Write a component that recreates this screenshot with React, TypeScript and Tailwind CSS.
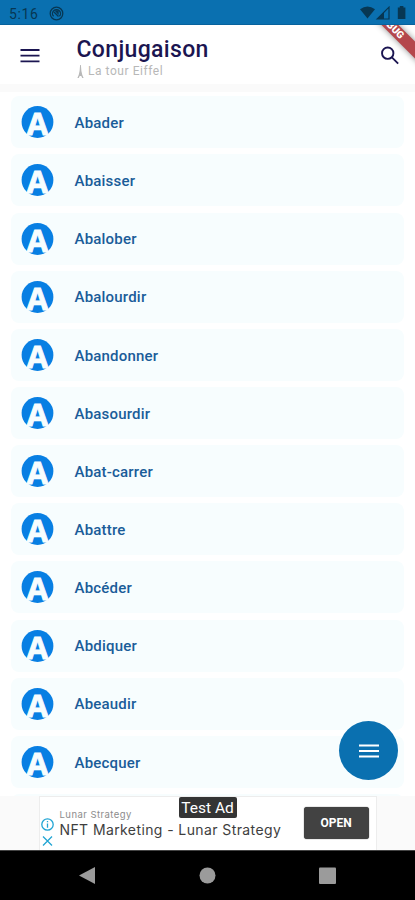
const verbs = [
  "Abader",
  "Abaisser",
  "Abalober",
  "Abalourdir",
  "Abandonner",
  "Abasourdir",
  "Abat-carrer",
  "Abattre",
  "Abcéder",
  "Abdiquer",
  "Abeaudir",
  "Abecquer",
];

const StatusBar = () => (
  <div className="flex h-[25px] shrink-0 items-center border-b border-[#07629d] bg-[#0a70b0] pl-[9px] pr-[8px] text-[#073753]">
    <span className="pt-[3px] text-[14px] leading-none tracking-[0.6px]">5:16</span>
    <svg className="ml-[11px] mt-[2px] h-[15px] w-[15px]" viewBox="0 0 15 15" fill="none" stroke="currentColor" strokeWidth="1.3">
      <circle cx="7.5" cy="7.5" r="6.3" />
      <path d="M4.6 10.3a4 4 0 1 1 5.8 0M5 6l4.5 4.5" />
      <path d="M6.8 5h2.2v2.4z" fill="currentColor" />
    </svg>
    <svg className="ml-auto mt-[2px] h-[14px] w-[48px]" viewBox="0 0 48 14">
      <path d="M1 3.2Q8.5 -2.2 16 3.2L8.5 12.6Z" fill="currentColor" />
      <path d="M30 1.2V13H18.2Z" fill="none" stroke="currentColor" strokeWidth="1.2" />
      <path d="M25 6.2V13H18.2Z" fill="currentColor" />
      <path d="M40.8 0h3.6v1.4h2V13h-7.6V1.4h2z" fill="currentColor" />
    </svg>
  </div>
);

const Header = () => (
  <header className="relative flex h-[67px] shrink-0 overflow-hidden border-b-[8px] border-[#fafafa] bg-white">
    <svg className="ml-[20px] mt-[23px] h-[15px] w-[20px]" viewBox="0 0 20 15" stroke="#1b1551" strokeWidth="1.8">
      <path d="M.5 2h19M.5 7.7h19M.5 13.4h19" />
    </svg>
    <div className="ml-[36.5px] pt-[13px]">
      <h1 className="text-[23px] font-medium leading-[24px] tracking-[0.35px] text-[#1b1551]">Conjugaison</h1>
      <div className="mt-[2px] flex items-center text-[#b8b8b8]">
        <svg className="-ml-[1px] h-[15px] w-[9px]" viewBox="0 0 9 15" fill="currentColor">
          <path d="M4.1 1h.8l.5 6q.6 4 2.2 7H6.2L5.3 12H3.7L2.8 14H1.4q1.6-3 2.2-7z" />
        </svg>
        <span className="ml-[3.5px] text-[12px] leading-[15px] tracking-[0.55px]">La tour Eiffel</span>
      </div>
    </div>
    <svg className="ml-auto mr-[15px] mt-[21px] h-[19px] w-[20px]" viewBox="0 0 20 20" fill="none" stroke="#1b1551" strokeWidth="2">
      <circle cx="7.6" cy="7.6" r="6" />
      <path d="m12 12 6.6 6.6" />
    </svg>
    <div className="absolute -right-[26px] -top-[5px] flex h-[12px] w-[100px] rotate-45 items-center justify-center bg-[#b4474c] text-[10px] font-black leading-none text-white shadow-[0_0_6px_rgba(0,0,0,0.45)]">
      DEBUG
    </div>
  </header>
);

const VerbIcon = () => (
  <svg className="h-[32px] w-[34px] shrink-0 overflow-visible" viewBox="0 0 34 32">
    <circle cx="16.5" cy="16" r="15.9" fill="#087fe3" />
    <text x="16.5" y="29" textAnchor="middle" fill="#f7fdfe" stroke="#f7fdfe" strokeWidth="0.9" fontFamily="Open Sans, sans-serif" fontWeight="700" fontSize="31">
      A
    </text>
  </svg>
);

const Ad = () => (
  <div className="flex h-[54px] shrink-0 justify-center bg-[#fafafa]">
    <div className="relative flex h-[54px] w-[338px] border border-b-0 border-[#ededed] bg-white">
      <svg className="ml-[1px] mt-[20px] h-[30px] w-[13px]" viewBox="0 0 13 30" fill="none" stroke="#22a5d4" strokeWidth="1.3">
        <circle cx="6.5" cy="7.5" r="5.7" />
        <path d="M6.5 6.5v4.3M6.5 4v1.3M2 19.5l9 9M11 19.5l-9 9" />
      </svg>
      <div className="ml-[6px] whitespace-nowrap pt-[11px] font-['Inter',sans-serif]">
        <p className="text-[9.5px] leading-[14px] tracking-[0.45px] text-[#8c8c8c]">Lunar Strategy</p>
        <p className="text-[14px] leading-[16px] tracking-[0.4px] text-[#3e3e3e]">NFT Marketing - Lunar Strategy</p>
      </div>
      <button className="absolute right-[7px] top-[10px] h-[32px] w-[65px] rounded-[3px] bg-[#424242] text-[12px] font-bold text-white shadow-[0_0_1px_#222]">
        OPEN
      </button>
      <div className="absolute left-[139px] top-0 flex h-[21px] w-[58px] items-center justify-center rounded-[2px] bg-[#343434] pt-[2px] text-[15.5px] text-white">
        Test Ad
      </div>
    </div>
  </div>
);

const App = () => {
  return (
    <div className="relative flex h-[900px] w-[415px] flex-col overflow-hidden bg-white font-['Roboto',sans-serif]">
      <StatusBar />
      <Header />
      <main className="min-h-0 flex-1 overflow-hidden px-[11px] pt-[4.3px]">
        <ul className="flex flex-col gap-[6.15px]">
          {verbs.map((verb) => (
            <li key={verb} className="flex h-[52px] shrink-0 items-center rounded-[8px] bg-[#f7fdfe] pl-[10px]">
              <VerbIcon />
              <span className="ml-[19.5px] pt-[2px] text-[15px] font-medium tracking-[0.2px] text-[#1a5c99]">{verb}</span>
            </li>
          ))}
          <li className="h-[52px] shrink-0 rounded-[8px] bg-[#f7fdfe]" />
        </ul>
      </main>
      <Ad />
      <nav className="h-[50px] shrink-0 border-t border-[#444] bg-black">
        <svg className="h-[49px] w-full" viewBox="0 0 415 49" fill="#9b9b9b">
          <path d="M79 24.5 95 16v17z" />
          <circle cx="207.5" cy="24.5" r="8" />
          <rect x="319" y="16.5" width="17" height="16.5" rx="1" />
        </svg>
      </nav>
      <button className="absolute right-[17px] top-[721px] flex h-[59px] w-[59px] items-center justify-center rounded-full bg-[#0a70b0]">
        <svg className="h-[14px] w-[20px]" viewBox="0 0 20 14" stroke="#fff" strokeWidth="2.2">
          <path d="M0 1.5h20M0 7h20M0 12.5h20" />
        </svg>
      </button>
    </div>
  );
};

export default App;
